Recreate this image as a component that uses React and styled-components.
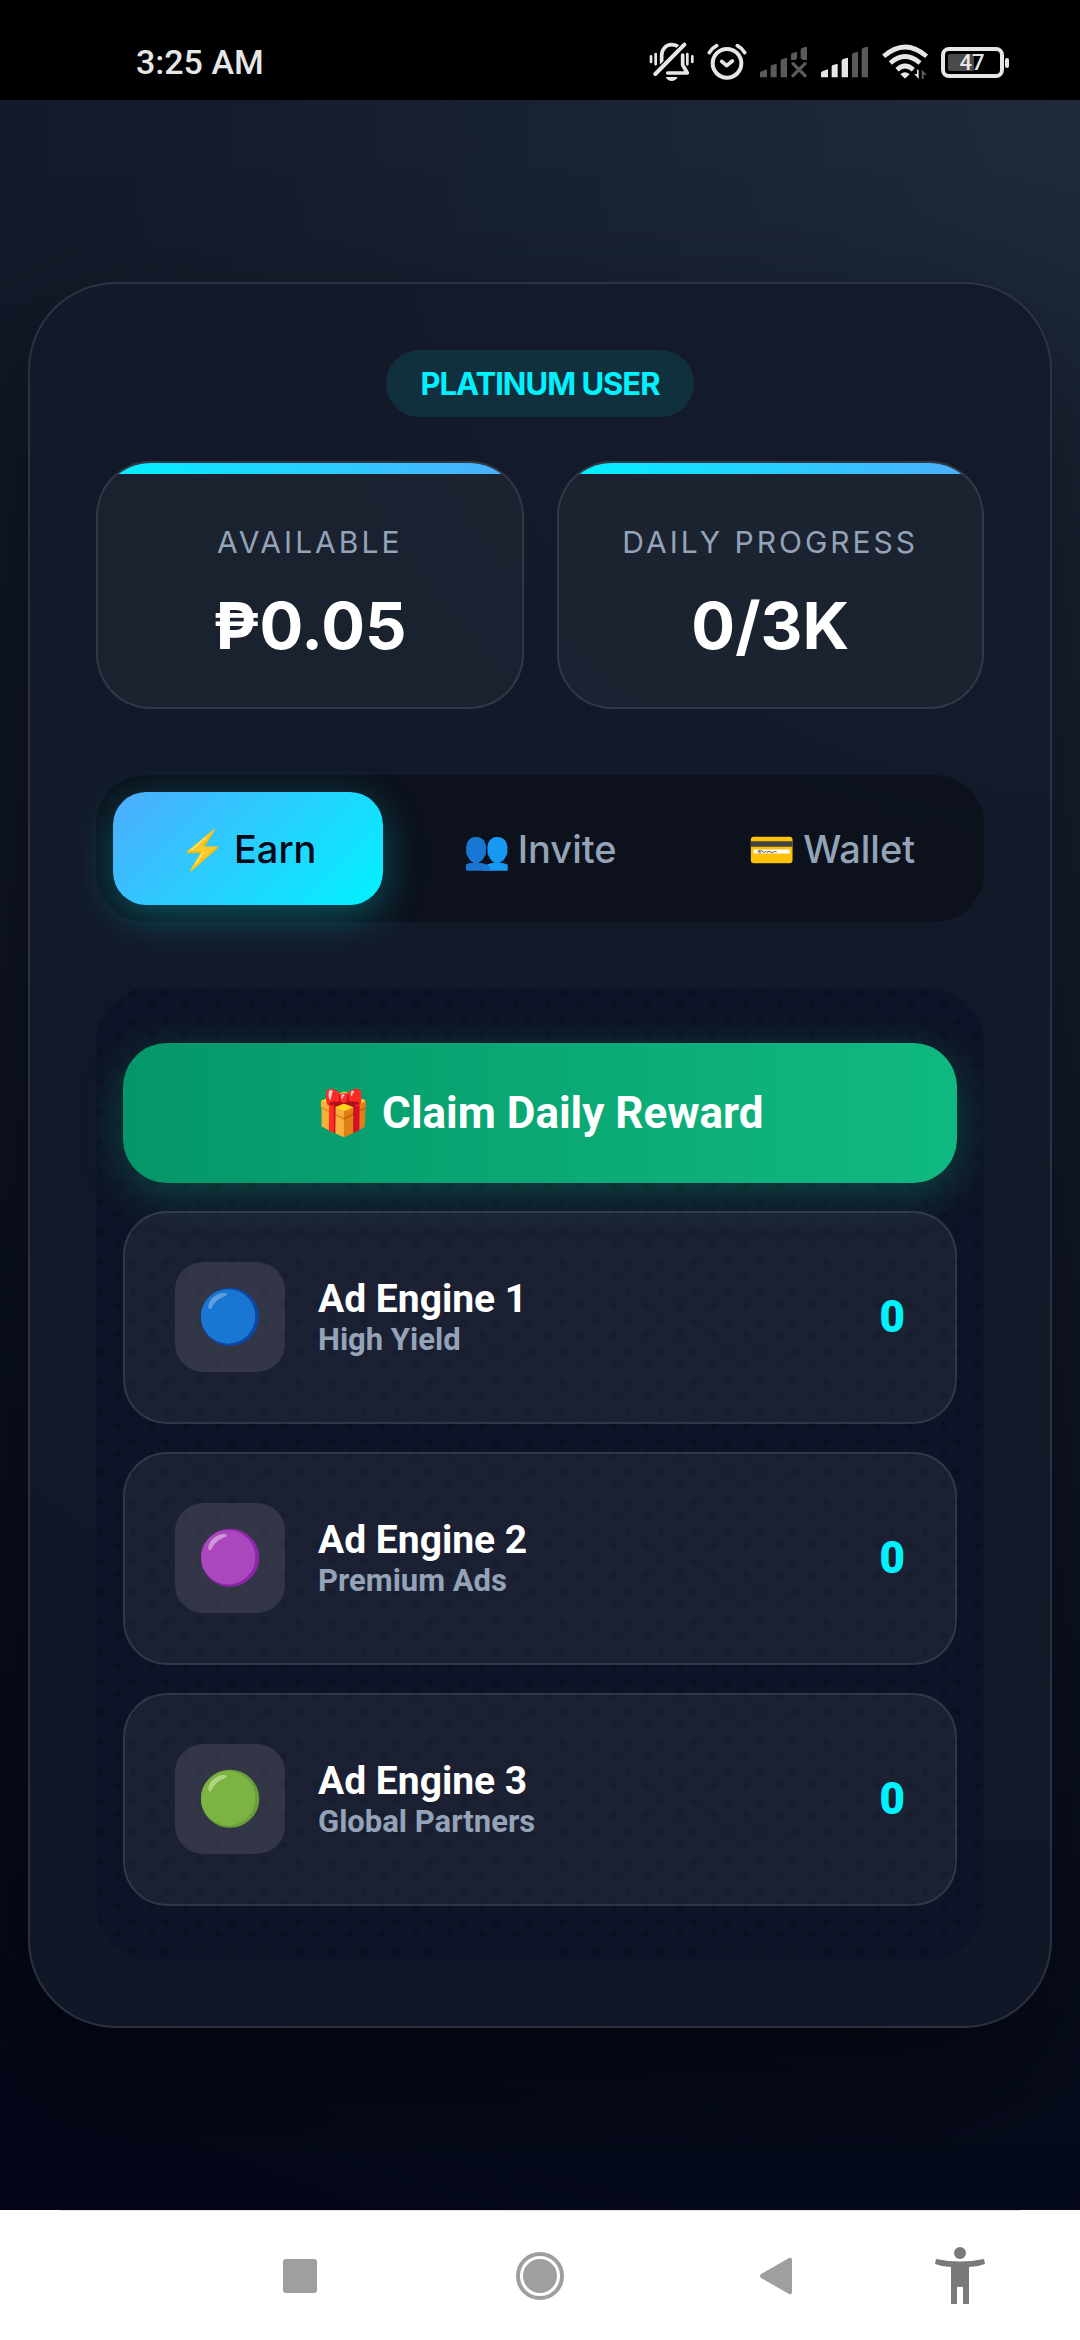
import React, { useState } from "react";
import styled, { createGlobalStyle } from "styled-components";

const GlobalStyle = createGlobalStyle`
  * {
    box-sizing: border-box;
  }
  body {
    margin: 0;
    background: #fff;
    font-family: Roboto, "Noto Color Emoji", sans-serif;
  }
  button {
    font-family: inherit;
    border: none;
    cursor: pointer;
  }
`;

const brandFont = `Inter, "Noto Color Emoji", sans-serif`;

const Screen = styled.div`
  min-height: 100vh;
  display: flex;
  flex-direction: column;
`;

/* phone status bar */
const StatusBar = styled.header`
  height: 100px;
  padding: 24px 70px 0 136px;
  background: #000;
  color: #e6e6e6;
  display: flex;
  align-items: center;
  justify-content: space-between;
`;

const Time = styled.span`
  font-size: 34px;
  font-weight: 500;
`;

const StatusIcons = styled.div`
  display: flex;
  align-items: center;
  gap: 13px;

  svg {
    display: block;
  }
`;

/* app */
const Page = styled.main`
  flex: 1;
  padding: 28px;
  display: flex;
  flex-direction: column;
  justify-content: center;
  background: radial-gradient(
    circle at top right,
    #1f2a3b 0%,
    #111827 50%,
    #020617 100%
  );
  overflow: hidden;
`;

const Card = styled.section`
  padding: 66px;
  border: 2px solid rgba(255, 255, 255, 0.11);
  border-radius: 88px;
  background: rgba(18, 25, 40, 0.87);
  box-shadow: 0 55px 138px rgba(0, 0, 0, 0.5);
  display: flex;
  flex-direction: column;
  gap: 66px;
`;

const Summary = styled.div`
  display: flex;
  flex-direction: column;
  align-items: center;
  gap: 44px;
`;

const Badge = styled.span`
  padding: 11px 34px;
  border-radius: 55px;
  background: rgba(0, 242, 255, 0.1);
  color: #00f2ff;
  font-family: ${brandFont};
  font-size: 31px;
  font-weight: 700;
  line-height: 45px;
  letter-spacing: -1px;
`;

const Stats = styled.div`
  width: 100%;
  display: grid;
  grid-template-columns: 1fr 1fr;
  gap: 33px;
`;

const Stat = styled.div`
  position: relative;
  overflow: hidden;
  padding: 57px 22px 43px;
  border: 2px solid rgba(255, 255, 255, 0.1);
  border-radius: 55px;
  background: rgba(255, 255, 255, 0.035);
  display: flex;
  flex-direction: column;
  align-items: center;
  gap: 24px;
  font-family: ${brandFont};

  &::before {
    content: "";
    position: absolute;
    top: 0;
    left: 0;
    right: 0;
    height: 11px;
    background: linear-gradient(90deg, #00f2ff, #4facfe);
  }
`;

const StatLabel = styled.span`
  color: #94a3b8;
  font-size: 30px;
  line-height: 44px;
  letter-spacing: 3px;
  text-transform: uppercase;
`;

const StatValue = styled.span`
  color: #fff;
  font-size: 65px;
  font-weight: 700;
  line-height: 76px;
`;

const Tabs = styled.nav`
  padding: 17px;
  border-radius: 49px;
  background: rgba(0, 0, 0, 0.3);
  display: grid;
  grid-template-columns: repeat(3, 1fr);
  gap: 22px;
`;

const Tab = styled.button`
  height: 113px;
  padding: 0;
  border-radius: 33px;
  display: flex;
  align-items: center;
  justify-content: center;
  gap: 7px;
  font-family: ${brandFont};
  font-size: 38px;
  font-weight: 500;
  color: ${(props) => (props.$active ? "#020617" : "#94a3b8")};
  background: ${(props) =>
    props.$active ? "linear-gradient(135deg, #4facfe, #00f2ff)" : "none"};
  box-shadow: ${(props) =>
    props.$active ? "0 11px 41px rgba(0, 242, 255, 0.3)" : "none"};
`;

const Panel = styled.div`
  padding: 55px 27px 54px;
  border-radius: 55px;
  background-color: #0e1427;
  background-image:
    radial-gradient(circle at 4px 4px, #0b1020 2px, transparent 5px),
    radial-gradient(circle at 23px 17px, #0b1020 2px, transparent 5px);
  background-size: 33px 30px;
  display: flex;
  flex-direction: column;
  gap: 28px;
`;

const ClaimButton = styled.button`
  height: 140px;
  border-radius: 44px;
  background: linear-gradient(90deg, #059669, #10b981);
  box-shadow: 0 11px 41px rgba(16, 185, 129, 0.3);
  color: #fff;
  font-size: 44px;
  font-weight: 700;
`;

const Engine = styled.button`
  padding: 49px 50px 50px;
  border: 2px solid rgba(255, 255, 255, 0.1);
  border-radius: 44px;
  background: rgba(255, 255, 255, 0.055);
  display: flex;
  align-items: center;
  gap: 33px;
  text-align: left;
  font-weight: 700;
`;

const EngineIcon = styled.span`
  width: 110px;
  height: 110px;
  border-radius: 28px;
  background: rgba(255, 255, 255, 0.1);
  display: flex;
  align-items: center;
  justify-content: center;
  font-size: 53px;
`;

const EngineText = styled.span`
  flex: 1;
  display: flex;
  flex-direction: column;
`;

const EngineName = styled.span`
  color: #fff;
  font-size: 39px;
  line-height: 45px;
`;

const EngineNote = styled.span`
  color: #94a3b8;
  font-size: 31px;
  line-height: 36px;
`;

const Count = styled.span`
  color: #00f2ff;
  font-size: 44px;
  font-weight: 900;
`;

/* phone navigation */
const NavBar = styled.footer`
  height: 130px;
  padding: 0 60px;
  background: #fff;
  display: flex;
`;

const NavRow = styled.div`
  flex: 1;
  padding-left: 120px;
  border-top: 1px solid #e2e2e2;
  display: grid;
  grid-template-columns: 2fr 2fr 2fr 1fr;
`;

const NavButton = styled.button`
  padding: 0;
  background: none;
  color: ${(props) => (props.$dark ? "#7a7a7a" : "#9f9f9f")};
  display: flex;
  align-items: center;
  justify-content: center;
`;

const MutedBellIcon = () => (
  <svg width="45" height="40" viewBox="82 69 135 120" fill="none" stroke="#e6e6e6" strokeLinecap="round">
    <path d="M120 134V110C120 90 133 77 150 77C158 77 165 79 171 84" strokeWidth="11" />
    <path d="M183 108V138L197 162H138" strokeWidth="11" strokeLinejoin="round" />
    <path d="M188 77L101 165" stroke="#000" strokeWidth="20" />
    <path d="M188 77L101 165" strokeWidth="12" />
    <path d="M132 174H168C164 182 158 186 150 186S136 182 132 174Z" fill="#e6e6e6" stroke="none" />
    <path d="M88 112V129M102 105V136M197 105V136M212 112V129" strokeWidth="8" />
  </svg>
);

const AlarmIcon = () => (
  <svg width="40" height="38" viewBox="260 69 120 114" fill="none" stroke="#e6e6e6" strokeLinecap="round" strokeLinejoin="round">
    <circle cx="320" cy="130" r="43" strokeWidth="12" />
    <path d="M304 124L319 137L336 123" strokeWidth="11" />
    <path d="M267 98Q275 84 289 77M351 77Q365 84 373 98" strokeWidth="11" />
  </svg>
);

const bars = [
  "M0 92V80Q0 75 4 74L21 68V92Z",
  "M32 92V60Q32 56 36 55L50 51V92Z",
  "M62 92V44Q62 39 66 37L81 33V92Z",
  "M93 92V25Q93 21 97 19L111 15V92Z",
  "M122 92V10Q122 5 126 3L141 0V92Z",
];

const SignalIcon = ({ level }) => (
  <svg width="48" height="32" viewBox="0 -2 144 96">
    {bars.map((d, i) => (
      <path key={d} d={d} fill={i < level ? "#e6e6e6" : "#5a5a5a"} />
    ))}
  </svg>
);

const NoSignalIcon = () => (
  <svg width="48" height="32" viewBox="0 -2 144 96" fill="#5a5a5a">
    {bars.slice(0, 3).map((d) => (
      <path key={d} d={d} />
    ))}
    <path d="M93 40V25Q93 21 97 19L111 15V34Q109 40 103 40Z" />
    <path d="M122 34V10Q122 5 126 3L141 0V40H128Z" />
    <path d="M99 51L135 87M135 51L99 87" stroke="#5a5a5a" strokeWidth="10" strokeLinecap="round" />
  </svg>
);

const WifiIcon = () => (
  <svg width="46" height="36" viewBox="779 75 138 108" fill="none" stroke="#e6e6e6" strokeWidth="14">
    <path d="M784 112Q848 56 913 112" />
    <path d="M804 132Q848 93 893 132" />
    <path d="M824 152Q848 130 873 152" />
    <path d="M834 166Q848 153 862 166L851 176Q848 179 845 176Z" fill="#e6e6e6" stroke="none" />
    <path d="M889 152V180L876 165H884V152Z" fill="#e6e6e6" stroke="none" />
    <path d="M898 180V152L914 167H904V180Z" fill="#5a5a5a" stroke="none" />
  </svg>
);

const BatteryIcon = ({ percent }) => (
  <svg width="69" height="31" viewBox="0 0 69 31">
    <rect x="2" y="2" width="59" height="27" rx="6" fill="none" stroke="#e6e6e6" strokeWidth="4" />
    <rect x="7" y="7" width="26" height="17" rx="2" fill="#4a4a4a" />
    <rect x="64" y="11" width="4" height="10" rx="2" fill="#e6e6e6" />
    <text x="31" y="23" textAnchor="middle" fontSize="22" fontWeight="500" fontFamily="Roboto, sans-serif" fill="#e6e6e6">
      {percent}
    </text>
  </svg>
);

const tabs = [
  { id: "earn", icon: "⚡", label: "Earn" },
  { id: "invite", icon: "👥", label: "Invite" },
  { id: "wallet", icon: "💳", label: "Wallet" },
];

const engines = [
  { icon: "🔵", name: "Ad Engine 1", note: "High Yield", count: 0 },
  { icon: "🟣", name: "Ad Engine 2", note: "Premium Ads", count: 0 },
  { icon: "🟢", name: "Ad Engine 3", note: "Global Partners", count: 0 },
];

const App = () => {
  const [active, setActive] = useState("earn");

  return (
    <Screen>
      <GlobalStyle />
      <StatusBar>
        <Time>3:25 AM</Time>
        <StatusIcons>
          <MutedBellIcon />
          <AlarmIcon />
          <NoSignalIcon />
          <SignalIcon level={3} />
          <WifiIcon />
          <BatteryIcon percent={47} />
        </StatusIcons>
      </StatusBar>

      <Page>
        <Card>
          <Summary>
            <Badge>PLATINUM USER</Badge>
            <Stats>
              <Stat>
                <StatLabel>Available</StatLabel>
                <StatValue>₱0.05</StatValue>
              </Stat>
              <Stat>
                <StatLabel>Daily Progress</StatLabel>
                <StatValue>0/3K</StatValue>
              </Stat>
            </Stats>
          </Summary>

          <Tabs>
            {tabs.map((tab) => (
              <Tab
                key={tab.id}
                $active={active === tab.id}
                onClick={() => setActive(tab.id)}
              >
                <span>{tab.icon}</span>
                <span>{tab.label}</span>
              </Tab>
            ))}
          </Tabs>

          <Panel>
            <ClaimButton>🎁 Claim Daily Reward</ClaimButton>
            {engines.map((engine) => (
              <Engine key={engine.name}>
                <EngineIcon>{engine.icon}</EngineIcon>
                <EngineText>
                  <EngineName>{engine.name}</EngineName>
                  <EngineNote>{engine.note}</EngineNote>
                </EngineText>
                <Count>{engine.count}</Count>
              </Engine>
            ))}
          </Panel>
        </Card>
      </Page>

      <NavBar>
        <NavRow>
          <NavButton aria-label="Recent apps">
            <svg width="34" height="34" viewBox="0 0 34 34" fill="currentColor">
              <rect width="34" height="34" rx="3" />
            </svg>
          </NavButton>
          <NavButton aria-label="Home">
            <svg width="50" height="50" viewBox="0 0 50 50" fill="currentColor">
              <circle cx="25" cy="25" r="22" fill="none" stroke="currentColor" strokeWidth="4" />
              <circle cx="25" cy="25" r="17" />
            </svg>
          </NavButton>
          <NavButton aria-label="Back">
            <svg width="40" height="38" viewBox="0 0 40 38" fill="currentColor">
              <path d="M1 17Q-1 19 1 21L29 37Q32 38 32 35V3Q32 0 29 1Z" />
            </svg>
          </NavButton>
          <NavButton $dark aria-label="Accessibility">
            <svg width="50" height="57" viewBox="0 0 50 57" fill="currentColor">
              <circle cx="25" cy="6" r="6" />
              <path d="M1 12Q25 17 49 12L50 17Q42 20 34 20V57H28V40H22V57H16V20Q8 20 0 17Z" />
            </svg>
          </NavButton>
        </NavRow>
      </NavBar>
    </Screen>
  );
};

export default App;
